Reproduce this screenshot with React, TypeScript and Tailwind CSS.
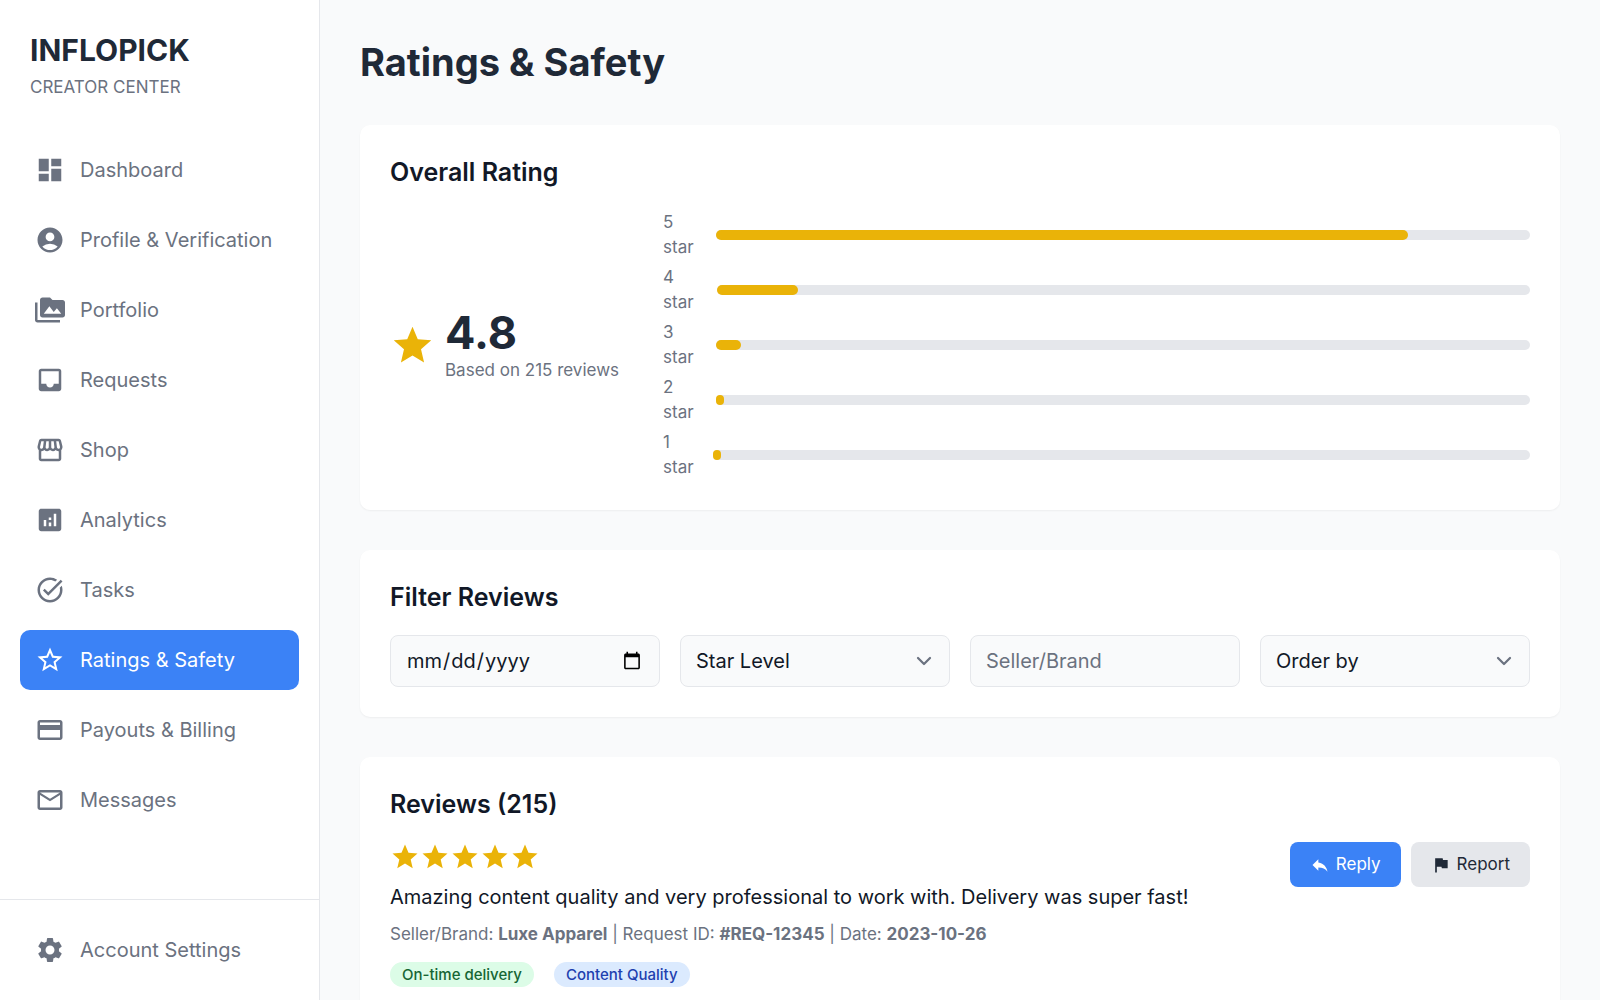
import type { ReactNode } from "react";
import type { IconType } from "react-icons";
import {
  MdAccountCircle,
  MdAnalytics,
  MdDashboard,
  MdFlag,
  MdInbox,
  MdOutlineCreditCard,
  MdOutlineMail,
  MdOutlineStorefront,
  MdPermMedia,
  MdReply,
  MdSettings,
  MdStar,
  MdStarBorder,
  MdTaskAlt,
} from "react-icons/md";

const navItems: { label: string; icon: IconType; active?: boolean }[] = [
  { label: "Dashboard", icon: MdDashboard },
  { label: "Profile & Verification", icon: MdAccountCircle },
  { label: "Portfolio", icon: MdPermMedia },
  { label: "Requests", icon: MdInbox },
  { label: "Shop", icon: MdOutlineStorefront },
  { label: "Analytics", icon: MdAnalytics },
  { label: "Tasks", icon: MdTaskAlt },
  { label: "Ratings & Safety", icon: MdStarBorder, active: true },
  { label: "Payouts & Billing", icon: MdOutlineCreditCard },
  { label: "Messages", icon: MdOutlineMail },
];

const breakdown = [
  { stars: 5, percent: 85 },
  { stars: 4, percent: 10 },
  { stars: 3, percent: 3 },
  { stars: 2, percent: 1 },
  { stars: 1, percent: 1 },
];

const fieldClass =
  "h-[52px] w-full appearance-none rounded-lg border border-[#e5e7eb] bg-[#f9fafb] px-[15px] text-[20px] leading-[30px] text-[#111827] placeholder:text-[#6b7280]";

function NavLink({ label, icon: Icon, active }: { label: string; icon: IconType; active?: boolean }) {
  return (
    <a
      href="#"
      aria-current={active ? "page" : undefined}
      className={
        active
          ? "flex items-center gap-[15px] rounded-[10px] bg-[#3b82f6] p-[15px] text-[20px] leading-[30px] text-white"
          : "flex items-center gap-[15px] rounded-[10px] p-[15px] text-[20px] leading-[30px] text-[#6b7280]"
      }
    >
      <Icon className="size-[30px] shrink-0" />
      {label}
    </a>
  );
}

function Card({ title, children }: { title: string; children: ReactNode }) {
  return (
    <section className="rounded-[10px] bg-white p-[30px] shadow-xs">
      <h2 className="mb-5 text-[25px] leading-[35px] font-semibold text-[#111827]">{title}</h2>
      {children}
    </section>
  );
}

function SelectField({ label, options }: { label: string; options: string[] }) {
  return (
    <div className="relative">
      <select aria-label={label} defaultValue={label} className={fieldClass}>
        <option>{label}</option>
        {options.map((option) => (
          <option key={option}>{option}</option>
        ))}
      </select>
      <svg
        viewBox="0 0 20 20"
        fill="none"
        stroke="#6b7280"
        strokeWidth="1.5"
        strokeLinecap="round"
        strokeLinejoin="round"
        className="pointer-events-none absolute inset-y-0 right-[11px] my-auto size-[30px]"
      >
        <path d="M6 8l4 4 4-4" />
      </svg>
    </div>
  );
}

export default function App() {
  return (
    <div className="flex h-screen bg-[#f9fafb] font-['Inter',sans-serif] text-[#111827]">
      <aside className="flex w-80 shrink-0 flex-col border-r border-[#e5e7eb] bg-white">
        <div className="p-[30px]">
          <div className="text-[30px] leading-[40px] font-bold text-[#1f2937]">INFLOPICK</div>
          <p className="mt-[5px] text-[17px] leading-[25px] text-[#6b7280]">CREATOR CENTER</p>
        </div>
        <nav className="flex flex-1 flex-col gap-[10px] px-5 py-[10px]">
          {navItems.map((item) => (
            <NavLink key={item.label} {...item} />
          ))}
        </nav>
        <div className="border-t border-[#e5e7eb] p-5">
          <NavLink label="Account Settings" icon={MdSettings} />
        </div>
      </aside>

      <main className="flex min-w-0 flex-1 flex-col gap-10 overflow-y-auto p-10">
        <h1 className="text-[38px] leading-[45px] font-bold text-[#1f2937]">Ratings &amp; Safety</h1>

        <Card title="Overall Rating">
          <div className="flex items-center gap-11">
            <div className="flex shrink-0 items-center gap-[10px]">
              <MdStar className="size-[45px] text-[#eab308]" />
              <div>
                <p className="text-[45px] leading-[50px] font-bold text-[#1f2937]">4.8</p>
                <p className="text-[17px] leading-[25px] text-[#6b7280]">Based on 215 reviews</p>
              </div>
            </div>
            <div className="flex min-w-0 flex-1 flex-col gap-[5px]">
              {breakdown.map(({ stars, percent }) => (
                <div key={stars} className="flex items-center gap-[10px]">
                  <span className="text-[17px] leading-[25px] text-[#6b7280]">{stars} star</span>
                  <div className="h-[10px] w-full rounded-full bg-[#e5e7eb]">
                    <div className="h-full rounded-full bg-[#eab308]" style={{ width: `${percent}%` }} />
                  </div>
                </div>
              ))}
            </div>
          </div>
        </Card>

        <Card title="Filter Reviews">
          <div className="grid grid-cols-4 gap-5">
            <input type="date" aria-label="Review date" className={fieldClass} />
            <SelectField label="Star Level" options={["5 star", "4 star", "3 star", "2 star", "1 star"]} />
            <input type="text" aria-label="Seller/Brand" placeholder="Seller/Brand" className={fieldClass} />
            <SelectField label="Order by" options={["Newest", "Oldest"]} />
          </div>
        </Card>

        <Card title="Reviews (215)">
          <article className="flex items-start justify-between gap-5">
            <div>
              <div className="flex text-[#eab308]" role="img" aria-label="5 out of 5 stars">
                {[1, 2, 3, 4, 5].map((n) => (
                  <MdStar key={n} className="size-[30px]" />
                ))}
              </div>
              <p className="mt-[10px] text-[20px] leading-[30px]">
                Amazing content quality and very professional to work with. Delivery was super fast!
              </p>
              <p className="mt-[10px] text-[17px] leading-[25px] text-[#6b7280]">
                Seller/Brand: <strong className="font-bold">Luxe Apparel</strong> | Request ID:{" "}
                <strong className="font-bold">#REQ-12345</strong> | Date:{" "}
                <strong className="font-bold">2023-10-26</strong>
              </p>
              <div className="mt-[15px] flex gap-5 text-[15px] leading-[25px] font-medium">
                <span className="rounded-full bg-[#dcfce7] px-3 text-[#166534]">On-time delivery</span>
                <span className="rounded-full bg-[#dbeafe] px-3 text-[#1e40af]">Content Quality</span>
              </div>
            </div>
            <div className="flex shrink-0 gap-[10px] text-[17px] leading-[25px]">
              <button
                type="button"
                className="flex items-center gap-[6px] rounded-lg bg-[#3b82f6] px-5 py-[10px] text-white"
              >
                <MdReply className="size-5" />
                Reply
              </button>
              <button
                type="button"
                className="flex items-center gap-[6px] rounded-lg bg-[#e5e7eb] px-5 py-[10px] text-[#1f2937]"
              >
                <MdFlag className="size-5" />
                Report
              </button>
            </div>
          </article>
        </Card>
      </main>
    </div>
  );
}
